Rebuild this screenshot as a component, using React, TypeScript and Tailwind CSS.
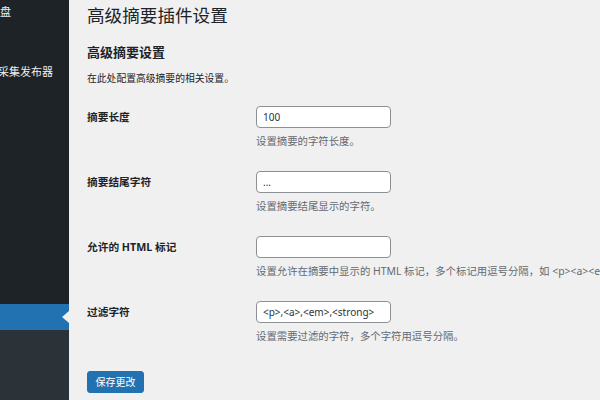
import React from "react";

const font = { fontFamily: '"Noto Sans", "Noto Sans CJK SC", sans-serif' };

type Row = { label: string; value: string; help: string };

const rows: Row[] = [
  { label: "摘要长度", value: "100", help: "设置摘要的字符长度。" },
  { label: "摘要结尾字符", value: "...", help: "设置摘要结尾显示的字符。" },
  {
    label: "允许的 HTML 标记",
    value: "",
    help: "设置允许在摘要中显示的 HTML 标记，多个标记用逗号分隔，如 <p><a><em><strong>。",
  },
  { label: "过滤字符", value: "<p>,<a>,<em>,<strong>", help: "设置需要过滤的字符，多个字符用逗号分隔。" },
];

export default function App() {
  return (
    <div
      className="flex w-[600px] h-[400px] overflow-hidden bg-[#f0f0f1] font-['Noto_Sans','Noto_Sans_CJK_SC',sans-serif]"
      style={font}
    >
      <aside className="w-[69px] shrink-0 flex flex-col bg-[#1d2327] overflow-hidden">
        <div className="h-[24px] flex items-center whitespace-nowrap text-[11px] text-[#f0f0f1] ml-[-22px]">
          仪表盘
        </div>
        <div className="h-[36px]" />
        <div className="h-[24px] flex items-center whitespace-nowrap text-[11px] text-[#f0f0f1] ml-[-2px]">
          采集发布器
        </div>
        <div className="h-[220px]" />
        <div className="relative h-[26px] bg-[#2271b1] shrink-0">
          <span className="absolute right-0 top-1/2 -translate-y-1/2 w-0 h-0 border-y-[6px] border-y-transparent border-r-[7px] border-r-[#f0f0f1]" />
        </div>
        <div className="flex-1 bg-[#2c3338]" />
      </aside>

      <main className="flex-1 min-w-0 pl-[18px] flex flex-col text-[#1d2327]">
        <h1 className="text-[17.6px] leading-[30px] font-normal whitespace-nowrap">高级摘要插件设置</h1>
        <h2 className="mt-[13px] text-[13px] leading-[18px] font-bold whitespace-nowrap">高级摘要设置</h2>
        <p className="mt-[11px] text-[9.8px] leading-[14px] whitespace-nowrap">在此处配置高级摘要的相关设置。</p>

        <div className="mt-[20px] flex flex-col gap-[23px]">
          {rows.map((r) => (
            <div key={r.label} className="flex">
              <div className="w-[169px] shrink-0 h-[22px] flex items-center text-[10.7px] font-bold whitespace-nowrap">
                {r.label}
              </div>
              <div className="flex flex-col min-w-0">
                <div className="w-[135px] h-[22px] bg-white border border-[#8c8f94] rounded-[4px] flex items-center px-[6px] text-[10px] text-[#2c3338] whitespace-nowrap overflow-hidden">
                  {r.value}
                </div>
                <div className="mt-[6px] h-[14px] leading-[14px] text-[10.4px] text-[#646970] whitespace-nowrap">
                  {r.help}
                </div>
              </div>
            </div>
          ))}
        </div>

        <div className="mt-[28px]">
          <button className="h-[22px] w-[57px] rounded-[3px] bg-[#2271b1] border border-[#2271b1] text-white text-[10px] flex items-center justify-center">
            保存更改
          </button>
        </div>
      </main>
    </div>
  );
}
